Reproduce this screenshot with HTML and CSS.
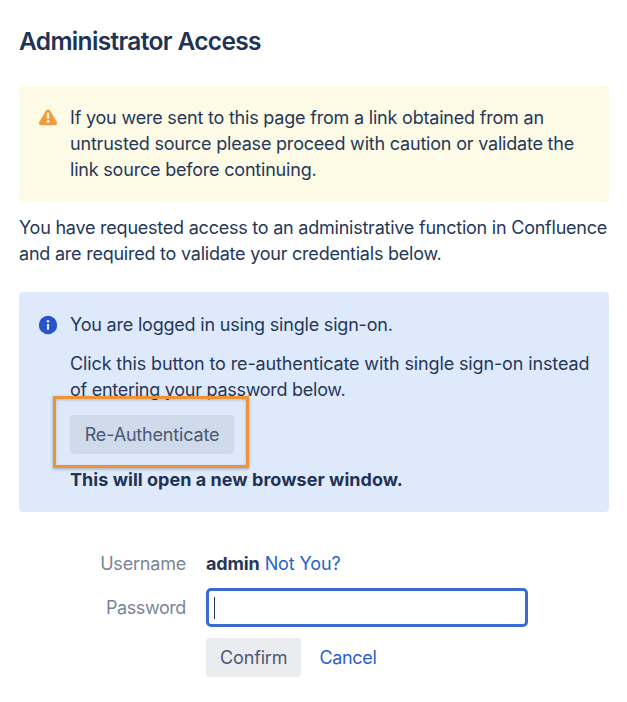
FILE: index.html
```html
<!DOCTYPE html>
<html lang="en">
<head>
  <meta charset="UTF-8">
  <title>Administrator Access</title>
  <link rel="stylesheet" href="styles.css">
</head>
<body>

  <h1>Administrator Access</h1>

  <div class="message warning">
    <svg class="icon" viewBox="0 0 20 20">
      <path d="M8 2.6 Q10 0.2 12 2.6 L18.5 13.4 Q20 16.8 16.8 17.2 H3.2 Q0 16.8 1.5 13.4 Z" fill="#f09c3c"/>
      <path d="M10 5.6 V9.8" stroke="#fefae6" stroke-width="2.4" stroke-linecap="round"/>
      <circle cx="10" cy="13.4" r="1.3" fill="#fefae6"/>
    </svg>
    <p>If you were sent to this page from a link obtained from an<br>untrusted source please proceed with caution or validate the<br>link source before continuing.</p>
  </div>

  <p class="intro">You have requested access to an administrative function in Confluence<br>and are required to validate your credentials below.</p>

  <div class="message info">
    <svg class="icon" viewBox="0 0 20 20">
      <circle cx="10" cy="10" r="9.2" fill="#2754c9"/>
      <circle cx="10" cy="6.2" r="1.3" fill="#deebff"/>
      <path d="M10 9.8 V14" stroke="#deebff" stroke-width="2.2" stroke-linecap="round"/>
    </svg>
    <div class="message-body">
      <p>You are logged in using single sign-on.</p>
      <p class="hint">Click this button to re-authenticate with single sign-on instead<br><span class="hint-end">of entering your password below.</span></p>
      <div class="reauth">
        <button type="button" class="button reauth-button">Re-Authenticate</button>
        <span class="highlight"></span>
      </div>
      <p class="note">This will open a new browser window.</p>
    </div>
  </div>

  <form class="login-form">
    <span class="label">Username</span>
    <div class="field"><strong>admin</strong> <a href="#">Not You?</a></div>
    <label class="label password-label" for="password">Password</label>
    <div class="input"><span class="caret"></span><input type="password" id="password"></div>
    <div class="buttons">
      <button type="submit" class="button">Confirm</button>
      <a href="#">Cancel</a>
    </div>
  </form>

</body>
</html>
```

FILE: styles.css
```css
* {
  box-sizing: border-box;
}

body {
  margin: 0;
  padding: 24px 18px 0 19px;
  background: #fff;
  color: #253858;
  font-family: Inter, sans-serif;
  font-size: 18px;
  line-height: 26px;
  letter-spacing: -0.2px;
}

h1, p {
  margin: 0;
}

p {
  white-space: nowrap;
}

h1 {
  color: #213354;
  font-size: 24.5px;
  font-weight: 600;
  line-height: 34px;
  letter-spacing: -0.65px;
}

a {
  color: #2b5fcf;
  text-decoration: none;
}

.message {
  display: flex;
  gap: 12px;
  padding: 20px 19px;
  border-radius: 4px;
}

.icon {
  flex: none;
  width: 20px;
  height: 20px;
  margin-top: 3px;
}

.warning {
  height: 116px;
  margin-top: 28px;
  padding-top: 19px;
  background: #fdfae6;
}

.intro {
  margin: 13px 0 25px;
  letter-spacing: -0.23px;
}

.info {
  height: 220px;
  background: #dfe9fc;
}

.hint {
  margin-top: 13px;
  letter-spacing: -0.13px;
}

.hint-end {
  letter-spacing: -0.27px;
}

.button {
  height: 39px;
  padding: 0 14px;
  border: none;
  border-radius: 4px;
  background: #ebecf0;
  color: #4a5872;
  font: inherit;
  letter-spacing: -0.15px;
  white-space: nowrap;
}

.reauth {
  position: relative;
  display: flex;
  width: 164px;
  margin: 12px 0 13px;
}

.reauth-button {
  width: 164px;
  background: #cfdaeb;
  letter-spacing: -0.17px;
}

/* orange frame around the button */
.highlight {
  position: absolute;
  top: -19px;
  left: -17px;
  width: 196px;
  height: 72px;
  border: 3px solid #ee9338;
  box-shadow: 0 1px 3px rgba(0, 0, 0, 0.3), inset 0 1px 3px rgba(0, 0, 0, 0.2);
}

.note {
  color: #213354;
  font-weight: 700;
  letter-spacing: 0.04px;
}

.login-form {
  display: grid;
  grid-template-columns: 167px 322px;
  column-gap: 20px;
  align-items: center;
  margin-top: 39px;
}

.label {
  color: #7a8599;
  text-align: right;
}

.password-label {
  letter-spacing: -0.4px;
}

.field {
  letter-spacing: -0.12px;
}

.input {
  display: flex;
  align-items: center;
  height: 39px;
  margin: 11px 0;
  padding: 0 5px;
  border: 3px solid #3a6bd2;
  border-radius: 5px;
}

.input input {
  width: 100%;
  border: none;
  outline: none;
  background: none;
}

.caret {
  flex: none;
  width: 1px;
  height: 22px;
  background: #253858;
}

.buttons {
  grid-column: 2;
  display: flex;
  align-items: center;
  gap: 18px;
  letter-spacing: -0.3px;
}
```
